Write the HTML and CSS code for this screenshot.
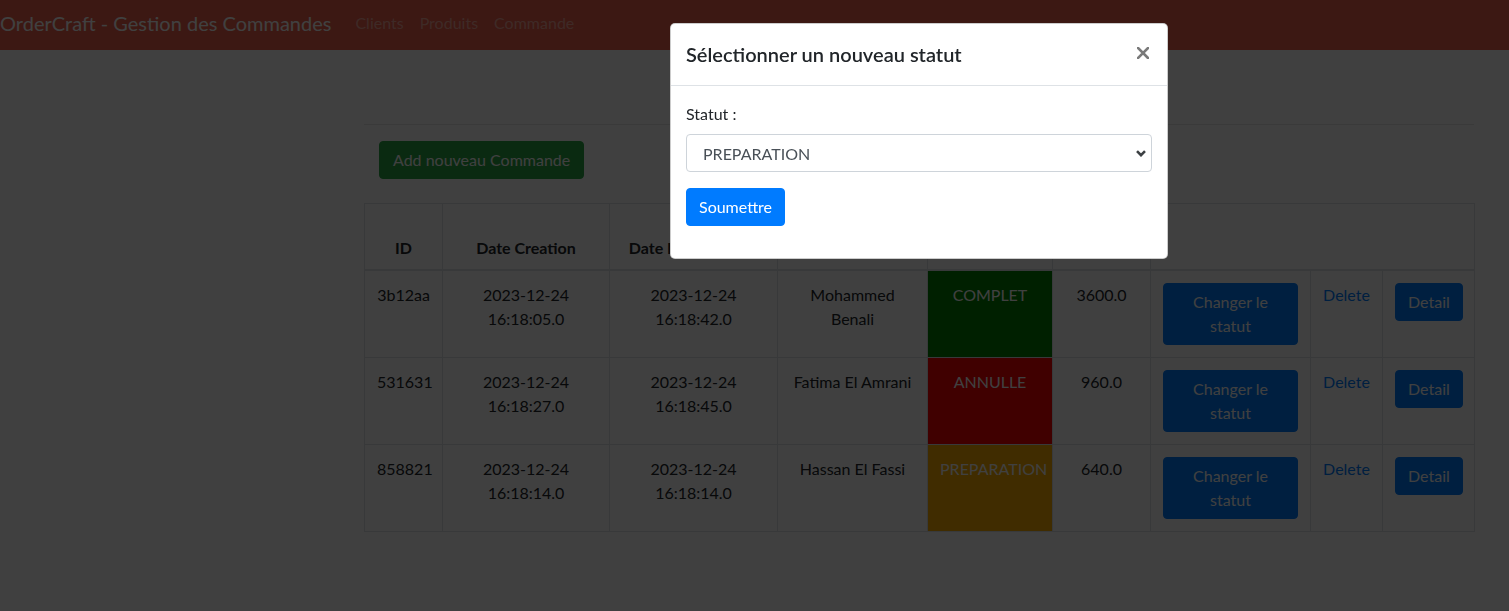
FILE: index.html
```html
<!DOCTYPE html>
<html lang="fr">
<head>
<meta charset="utf-8">
<title>OrderCraft - Gestion des Commandes</title>
<link rel="stylesheet" href="styles.css">
</head>
<body>
<nav class="navbar">
  <a class="brand" href="#">OrderCraft - Gestion des Commandes</a>
  <ul class="nav-links">
    <li><a href="#">Clients</a></li>
    <li><a href="#">Produits</a></li>
    <li><a href="#">Commande</a></li>
  </ul>
</nav>

<main class="page">
  <hr class="divider">
  <div class="toolbar">
    <button class="btn btn-success">Add nouveau Commande</button>
  </div>
  <table class="orders">
    <colgroup>
      <col class="c-id"><col class="c-date"><col class="c-date2"><col class="c-client"><col class="c-status"><col class="c-total"><col class="c-change"><col class="c-delete"><col class="c-detail">
    </colgroup>
    <thead>
      <tr>
        <th>ID</th>
        <th>Date Creation</th>
        <th>Date Modification</th>
        <th>Client</th>
        <th>Statut</th>
        <th>Total</th>
        <th colspan="3"></th>
      </tr>
    </thead>
    <tbody>
      <tr>
        <td>3b12aa</td>
        <td>2023-12-24 16:18:05.0</td>
        <td>2023-12-24 16:18:42.0</td>
        <td>Mohammed Benali</td>
        <td class="status st-complet">COMPLET</td>
        <td>3600.0</td>
        <td><button class="btn btn-primary btn-wrap">Changer le statut</button></td>
        <td><a class="link" href="#">Delete</a></td>
        <td><button class="btn btn-primary">Detail</button></td>
      </tr>
      <tr>
        <td>531631</td>
        <td>2023-12-24 16:18:27.0</td>
        <td>2023-12-24 16:18:45.0</td>
        <td>Fatima El Amrani</td>
        <td class="status st-annulle">ANNULLE</td>
        <td>960.0</td>
        <td><button class="btn btn-primary btn-wrap">Changer le statut</button></td>
        <td><a class="link" href="#">Delete</a></td>
        <td><button class="btn btn-primary">Detail</button></td>
      </tr>
      <tr>
        <td>858821</td>
        <td>2023-12-24 16:18:14.0</td>
        <td>2023-12-24 16:18:14.0</td>
        <td>Hassan El Fassi</td>
        <td class="status st-preparation">PREPARATION</td>
        <td>640.0</td>
        <td><button class="btn btn-primary btn-wrap">Changer le statut</button></td>
        <td><a class="link" href="#">Delete</a></td>
        <td><button class="btn btn-primary">Detail</button></td>
      </tr>
    </tbody>
  </table>
</main>

<div class="backdrop"></div>

<div class="modal">
  <div class="modal-header">
    <h5 class="modal-title">Sélectionner un nouveau statut</h5>
    <button class="close" aria-label="Close">
      <svg width="12" height="12" viewBox="0 0 12 12"><path d="M1 1 L11 11 M11 1 L1 11" stroke="currentColor" stroke-width="2.6" stroke-linecap="square"/></svg>
    </button>
  </div>
  <div class="modal-body">
    <label class="field-label" for="statut">Statut :</label>
    <div class="select-wrap">
      <select id="statut" class="form-select">
        <option>PREPARATION</option>
        <option>COMPLET</option>
        <option>ANNULLE</option>
      </select>
      <svg class="chevron" width="10" height="7" viewBox="0 0 10 7"><path d="M1 1.2 L5 5.2 L9 1.2" fill="none" stroke="currentColor" stroke-width="2.6"/></svg>
    </div>
    <button class="btn btn-primary submit">Soumettre</button>
  </div>
</div>
</body>
</html>
```

FILE: styles.css
```css
* { box-sizing: border-box; }

html, body {
  margin: 0;
  padding: 0;
}

body {
  font-family: Lato, "Noto Sans", "Liberation Sans", sans-serif;
  font-size: 16px;
  line-height: 1.5;
  color: #212529;
  background: #fff;
  height: 611px;
  overflow: hidden;
}

/* Navbar */
.navbar {
  display: flex;
  align-items: flex-start;
  height: 50px;
  padding: 8px 0 0 0;
  background: #f0614b;
}

.brand {
  font-size: 20px;
  line-height: 30px;
  color: #fff;
  text-decoration: none;
  margin-right: 16px;
  white-space: nowrap;
}

.nav-links {
  display: flex;
  list-style: none;
  margin: 0;
  padding: 3px 0 0 0;
}

.nav-links a {
  display: block;
  padding: 0 8px;
  line-height: 24px;
  color: rgba(255, 255, 255, 0.45);
  text-decoration: none;
}

/* Page */
.page {
  margin-left: 364px;
  width: 1110px;
  padding-top: 74px;
}

.divider {
  margin: 0 0 16px 0;
  border: 0;
  border-top: 1px solid rgba(0, 0, 0, 0.1);
}

.toolbar {
  padding-left: 15px;
  margin-bottom: 24px;
}

.btn {
  display: inline-block;
  font-family: inherit;
  font-size: 16px;
  line-height: 24px;
  padding: 6px 12px;
  border: 1px solid transparent;
  border-radius: 4px;
  cursor: pointer;
  text-align: center;
}

.btn-success {
  background: #28a745;
  border-color: #28a745;
  color: #fff;
  padding: 6px 13px;
}

.btn-primary {
  background: #007bff;
  border-color: #007bff;
  color: #fff;
}

.btn-wrap {
  width: 100%;
}

/* Table */
.orders {
  width: 1110px;
  table-layout: fixed;
  border-collapse: collapse;
}

.c-id { width: 78px; }
.c-date { width: 167px; }
.c-date2 { width: 168px; }
.c-client { width: 150px; }
.c-status { width: 125px; }
.c-total { width: 98px; }
.c-change { width: 160px; }
.c-delete { width: 72px; }
.c-detail { width: 92px; }

.orders th,
.orders td {
  border: 1px solid #dee2e6;
  padding: 12px;
  text-align: center;
  vertical-align: top;
}

.orders thead tr {
  height: 66px;
}

.orders th {
  vertical-align: bottom;
  border-bottom-width: 2px;
  padding-bottom: 9px;
  font-weight: 700;
  white-space: nowrap;
  overflow: hidden;
}

.status { color: #fff; }
.st-complet { background: #008000; }
.st-annulle { background: #ff0000; }
.st-preparation { background: #ffb000; }

.link {
  color: #007bff;
  text-decoration: none;
}

/* Backdrop + modal */
.backdrop {
  position: fixed;
  inset: 0;
  background: rgba(0, 0, 0, 0.75);
}

.modal {
  position: absolute;
  left: 670px;
  top: 23px;
  width: 498px;
  background: #fff;
  border: 1px solid rgba(0, 0, 0, 0.2);
  border-radius: 5px;
}

.modal-header {
  display: flex;
  align-items: center;
  justify-content: space-between;
  padding: 15px 16px 16px 15px;
  border-bottom: 1px solid #dee2e6;
}

.modal-title {
  margin: 0;
  font-size: 20px;
  font-weight: 600;
  line-height: 30px;
}

.close {
  display: flex;
  align-items: center;
  background: none;
  border: 0;
  padding: 0 2px 2px 0;
  color: #7a7a7a;
  cursor: pointer;
}

.modal-body {
  padding: 16px 15px 32px 15px;
}

.field-label {
  display: block;
  margin-bottom: 8px;
}

.select-wrap {
  position: relative;
  margin-bottom: 16px;
}

.form-select {
  display: block;
  width: 100%;
  height: 38px;
  padding: 0 30px 0 16px;
  font-family: inherit;
  font-size: 16px;
  color: #495057;
  background: #fff;
  border: 1px solid #ced4da;
  border-radius: 4px;
  appearance: none;
  -webkit-appearance: none;
}

.chevron {
  position: absolute;
  right: 6px;
  top: 16px;
  color: #3c4043;
  pointer-events: none;
}

.submit {
  display: block;
}
```
